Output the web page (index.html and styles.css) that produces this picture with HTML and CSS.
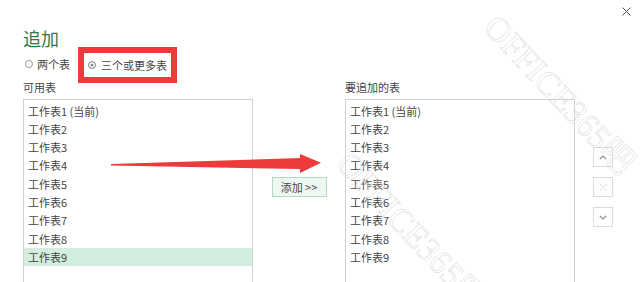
FILE: index.html
```html
<!DOCTYPE html>
<html lang="zh-CN">
<head>
<meta charset="utf-8">
<title>追加</title>
<link rel="stylesheet" href="styles.css">
</head>
<body>
<div class="dialog">
  <div class="header">
    <h1 class="title">追加</h1>
    <button class="close" aria-label="关闭">
      <svg width="9" height="9" viewBox="0 0 9 9"><path d="M0.5 0.5 L8.5 8.5 M8.5 0.5 L0.5 8.5" stroke="#555" stroke-width="1" fill="none"/></svg>
    </button>
  </div>
  <div class="radios">
    <label class="radio"><span class="dot"></span>两个表</label>
    <label class="radio marked"><span class="dot on"></span>三个或更多表</label>
  </div>
  <div class="pick">
    <div class="lbl">可用表</div>
    <div></div>
    <div class="lbl">要追加的表</div>
    <div></div>
    <ul class="list">
      <li>工作表1 (当前)</li>
      <li>工作表2</li>
      <li>工作表3</li>
      <li>工作表4</li>
      <li>工作表5</li>
      <li>工作表6</li>
      <li>工作表7</li>
      <li>工作表8</li>
      <li class="sel">工作表9</li>
    </ul>
    <div class="mid"><button class="add">添加 &gt;&gt;</button></div>
    <ul class="list">
      <li>工作表1 (当前)</li>
      <li>工作表2</li>
      <li>工作表3</li>
      <li>工作表4</li>
      <li>工作表5</li>
      <li>工作表6</li>
      <li>工作表7</li>
      <li>工作表8</li>
      <li>工作表9</li>
    </ul>
    <div class="side">
      <button class="sbtn" aria-label="上移"><svg width="8" height="5" viewBox="0 0 8 5"><path d="M0.8 4.2 L4 1 L7.2 4.2" stroke="#8a8a8a" stroke-width="1.2" fill="none"/></svg></button>
      <button class="sbtn" aria-label="删除"><svg width="9" height="9" viewBox="0 0 9 9"><path d="M0.5 0.5 L8.5 8.5 M8.5 0.5 L0.5 8.5" stroke="#e2e2e2" stroke-width="1" fill="none"/></svg></button>
      <button class="sbtn" aria-label="下移"><svg width="8" height="5" viewBox="0 0 8 5"><path d="M0.8 0.8 L4 4 L7.2 0.8" stroke="#8a8a8a" stroke-width="1.2" fill="none"/></svg></button>
    </div>
  </div>
</div>
<svg class="arrow" width="640" height="282" viewBox="0 0 640 282">
  <polygon points="111,164 300,158 300,154 321,162.7 300,173 300,169 111,165.5" fill="#ee3a3a"/>
</svg>
<div class="wm wm1">OFFICE365吧</div>
<div class="wm wm2">OFFICE365吧</div>
</body>
</html>
```

FILE: styles.css
```css
html, body {
  margin: 0;
  height: 282px;
  overflow: hidden;
  background: #fff;
}
body {
  position: relative;
  width: 640px;
  font-family: "Noto Sans CJK SC", "Noto Sans", sans-serif;
  font-size: 11px;
  color: #444;
}
.dialog {
  padding: 7px 9px 0 23px;
}
.header {
  display: flex;
  justify-content: space-between;
  align-items: flex-start;
}
.title {
  margin: 19px 0 0;
  font-size: 18px;
  font-weight: normal;
  line-height: 24px;
  color: #2e7b4c;
}
.close {
  width: 9px;
  height: 9px;
  padding: 0;
  border: 0;
  background: none;
  display: block;
}
.close svg { display: block; }
.radios {
  display: flex;
  align-items: center;
  height: 16px;
  margin-top: 6px;
  padding-left: 2px;
}
.radio {
  display: flex;
  align-items: center;
  gap: 4px;
  line-height: 16px;
}
.dot {
  width: 8px;
  height: 8px;
  box-sizing: border-box;
  border: 1px solid #9a9a9a;
  border-radius: 50%;
  background: #fff;
}
.dot.on {
  background: #8a8a8a;
  box-shadow: inset 0 0 0 1.5px #fff;
}
.marked {
  gap: 5px;
  margin: -9px 0 -11px 8px;
  padding: 4px;
  border: 6px solid #ee3a3a;
}
.pick {
  display: grid;
  grid-template-columns: 230px 92px 230px auto;
  row-gap: 4px;
  margin-top: 7px;
}
.lbl {
  line-height: 16px;
}
.list {
  margin: 0;
  padding: 1.5px 0 0;
  list-style: none;
  border: 1px solid #d2d2d2;
  height: 200px;
  box-sizing: border-box;
}
.list li {
  height: 18.3px;
  line-height: 18.3px;
  padding-left: 4px;
  white-space: nowrap;
}
.list li.sel {
  background: #d3eedf;
}
.mid {
  justify-self: center;
  padding-top: 78px;
}
.add {
  display: block;
  width: 55px;
  height: 20px;
  padding: 0;
  border: 1px solid #b2dcc2;
  background: #eef7f1;
  font: inherit;
  color: #444;
  line-height: 18px;
}
.side {
  display: flex;
  flex-direction: column;
  gap: 10px;
  padding: 48px 0 0 18px;
}
.sbtn {
  width: 20px;
  height: 20px;
  box-sizing: border-box;
  padding: 0;
  border: 1px solid #dcdcdc;
  background: #fff;
  display: flex;
  align-items: center;
  justify-content: center;
}
.sbtn svg { display: block; }
.arrow {
  position: absolute;
  left: 0;
  top: 0;
  pointer-events: none;
}
.wm {
  position: absolute;
  font-family: "Liberation Serif", "Noto Sans CJK SC", serif;
  font-size: 34px;
  line-height: 34px;
  color: transparent;
  -webkit-text-stroke: 0.5px #d8d8d8;
  transform-origin: 0 50%;
  transform: rotate(47deg);
  white-space: nowrap;
  pointer-events: none;
}
.wm1 { left: 490px; top: 4px; }
.wm2 { left: 343px; top: 141px; }
```
